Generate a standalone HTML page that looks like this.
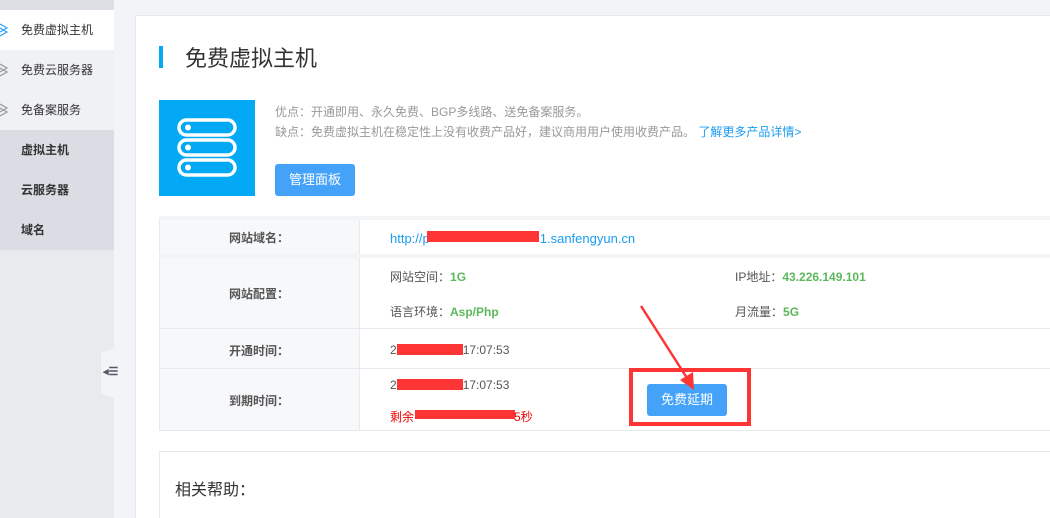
<!DOCTYPE html>
<html style="width:1050px;height:518px;overflow:hidden"><head><meta charset="utf-8"><style>
*{margin:0;padding:0;box-sizing:border-box}
body{width:1050px;height:518px;overflow:hidden;background:#f3f4f8;font-family:"Liberation Sans","Noto Sans CJK SC",sans-serif;position:relative;font-size:12px;color:#555}
.side{position:absolute;left:0;top:0;width:114px;height:518px;background:#e8eaee}
.si{position:absolute;left:0;width:114px;height:40px;line-height:40px;padding-left:21px;font-size:12px;color:#333}
.ab{position:absolute}
.card{position:absolute;left:135px;top:15px;width:930px;height:503px;background:#fff;border:1px solid #e8e9ec;border-bottom:none}
.lbl{position:absolute;left:159px;width:200px;background:#f7f8fa;text-align:center;font-weight:bold;color:#555;font-size:12px}
.hl{position:absolute;left:159px;width:891px;height:1px;background:#e8e9ec}
.g{color:#5cb85c;font-weight:bold}
.red{position:absolute;background:#fe3535}
</style></head><body>
<div class="side">
<div class="ab" style="left:0;top:0;width:114px;height:10px;background:#dcdfe4"></div>
<div class="si" style="top:10px;background:#fff">免费虚拟主机</div>
<div class="si" style="top:50px;background:#f0f1f4">免费云服务器</div>
<div class="si" style="top:90px;background:#f0f1f4">免备案服务</div>
<div class="si" style="top:130px;background:#dadde3;font-weight:bold">虚拟主机</div>
<div class="si" style="top:170px;background:#dadde3;font-weight:bold">云服务器</div>
<div class="si" style="top:210px;background:#dadde3;font-weight:bold">域名</div>
<svg class="ab" style="left:0;top:22px" width="10" height="100"><g fill="none" stroke-width="1.2"><path d="M0 2 7 6 0 10M0 6 7 10 0 14" stroke="#2aa4f4"/><path d="M0 42 7 46 0 50M0 46 7 50 0 54" stroke="#999"/><path d="M0 82 7 86 0 90M0 86 7 90 0 94" stroke="#999"/></g></svg>
</div>
<div class="ab" style="left:101px;top:348px;width:13px;height:50px;background:#f3f4f8;clip-path:polygon(0 10%,100% 0,100% 100%,0 90%)"></div>
<div class="ab" style="left:103px;top:365px;font-size:11px;color:#556;font-weight:bold">◂☰</div>
<div class="card"></div>
<div class="ab" style="left:159px;top:46px;width:4px;height:22px;background:#03a9f4"></div>
<div class="ab" style="left:185px;top:41px;font-size:22px;color:#333">免费虚拟主机</div>
<div class="ab" style="left:159px;top:100px;width:96px;height:96px;background:#03a9f4">
<svg width="96" height="96"><g fill="none" stroke="#fff" stroke-width="3.5"><rect x="20" y="20" width="56" height="15" rx="7.5"/><rect x="20" y="40" width="56" height="15" rx="7.5"/><rect x="20" y="60" width="56" height="15" rx="7.5"/></g><g fill="#fff"><circle cx="29" cy="27.5" r="3"/><circle cx="29" cy="47.5" r="3"/><circle cx="29" cy="67.5" r="3"/></g></svg></div>
<div class="ab" style="left:275px;top:103px;color:#999">优点：开通即用、永久免费、BGP多线路、送免备案服务。</div>
<div class="ab" style="left:275px;top:123px;color:#999">缺点：免费虚拟主机在稳定性上没有收费产品好，建议商用用户使用收费产品。 <span style="color:#1a9cf0">了解更多产品详情&gt;</span></div>
<div class="ab" style="left:275px;top:164px;width:80px;height:32px;background:#44a3f8;border-radius:3px;color:#fff;font-size:13px;text-align:center;line-height:32px">管理面板</div>
<div class="lbl" style="top:220px;height:210px"></div>
<div class="ab" style="left:159px;top:220px;width:1px;height:210px;background:#e8e9ec"></div>
<div class="ab" style="left:359px;top:220px;width:1px;height:210px;background:#e8e9ec"></div>
<div class="hl" style="top:216px;height:4px;background:#f3f4f6"></div>
<div class="hl" style="top:254px;height:4px;background:#f3f4f6"></div>
<div class="hl" style="top:328px"></div>
<div class="hl" style="top:368px"></div>
<div class="hl" style="top:430px"></div>
<div class="lbl" style="top:229px;background:none">网站域名：</div>
<div class="lbl" style="top:285px;background:none">网站配置：</div>
<div class="lbl" style="top:342px;background:none">开通时间：</div>
<div class="lbl" style="top:392px;background:none">到期时间：</div>
<div class="ab" style="left:390px;top:231px;color:#1a9cf0;font-size:13px">http://p<span style="display:inline-block;width:110px"></span>1.sanfengyun.cn</div>
<div class="red" style="left:427px;top:231px;width:112px;height:11px"></div>
<div class="ab" style="left:390px;top:268px">网站空间：<span class="g">1G</span></div>
<div class="ab" style="left:390px;top:303px">语言环境：<span class="g">Asp/Php</span></div>
<div class="ab" style="left:735px;top:268px">IP地址：<span class="g">43.226.149.101</span></div>
<div class="ab" style="left:735px;top:303px">月流量：<span class="g">5G</span></div>
<div class="ab" style="left:390px;top:343px">2<span style="display:inline-block;width:66px"></span>17:07:53</div>
<div class="red" style="left:397px;top:344px;width:66px;height:11px"></div>
<div class="ab" style="left:390px;top:378px">2<span style="display:inline-block;width:66px"></span>17:07:53</div>
<div class="red" style="left:397px;top:379px;width:66px;height:11px"></div>
<div class="ab" style="left:390px;top:408px;color:#e00">剩余<span style="display:inline-block;width:100px"></span>5秒</div>
<div class="red" style="left:415px;top:410px;width:100px;height:9px"></div>
<div class="ab" style="left:629px;top:368px;width:122px;height:58px;border:4px solid #fe3535"></div>
<div class="ab" style="left:647px;top:384px;width:80px;height:32px;background:#44a3f8;border-radius:3px;color:#fff;font-size:13px;text-align:center;line-height:32px">免费延期</div>
<svg class="ab" style="left:630px;top:300px" width="80" height="95"><path d="M11 6 57 78" stroke="#fe3535" stroke-width="2.5"/><path d="M50 80 64 90 63 72Z" fill="#fe3535"/></svg>
<div class="ab" style="left:159px;top:451px;width:900px;height:67px;background:#fff;border:1px solid #e8e9ec;border-bottom:none"></div>
<div class="ab" style="left:175px;top:476px;font-size:16px;color:#333">相关帮助：</div>
</body></html>
